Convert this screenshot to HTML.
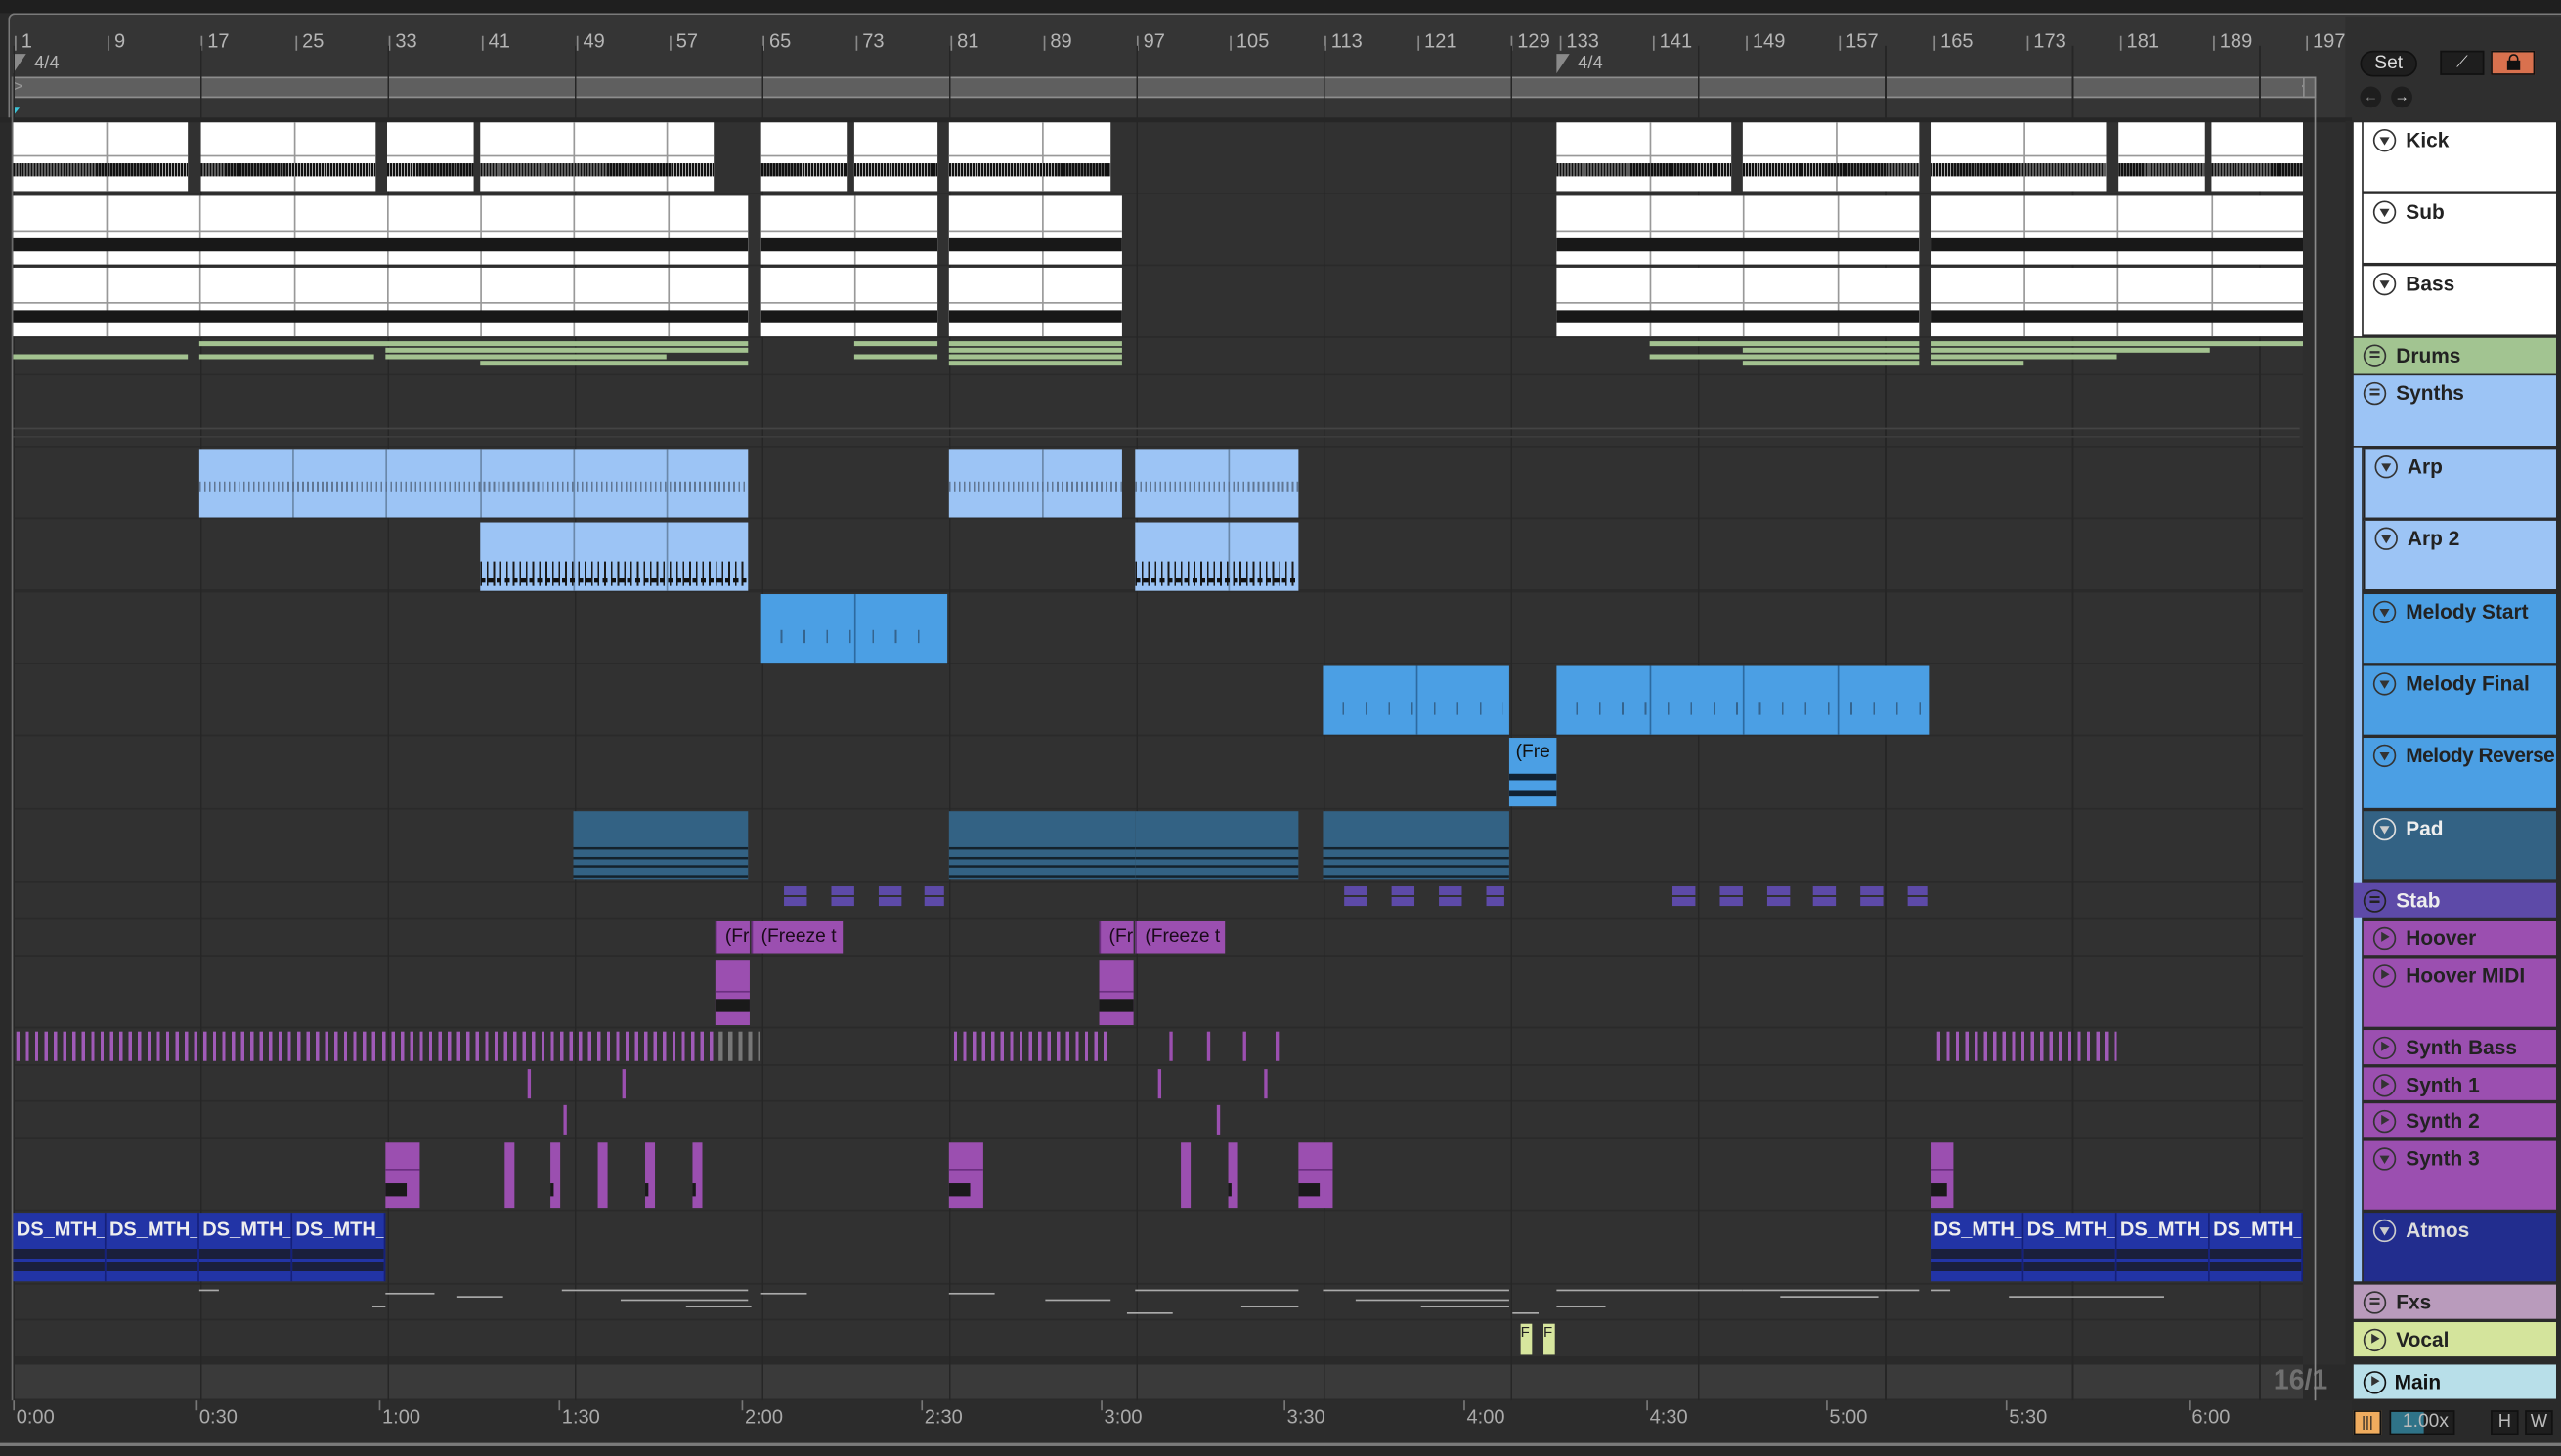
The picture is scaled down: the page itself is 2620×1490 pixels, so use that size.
<!DOCTYPE html>
<html><head><meta charset="utf-8"><style>
*{margin:0;padding:0;box-sizing:border-box}
body{width:2620px;height:1490px;overflow:hidden;background:#2b2b2b}
.w{position:absolute;left:0;top:0;width:1568px;height:892px;transform:scale(1.67092,1.6704);transform-origin:0 0;background:#2a2a2a;overflow:hidden;font-family:"Liberation Sans",sans-serif}
.a{position:absolute}
.row{position:absolute;left:8px;width:1402px;background:#313131}
.grid{position:absolute;left:8px;top:28px;width:1402px;height:830px;background:repeating-linear-gradient(90deg,#262626 0 1px,transparent 1px 114.6px)}
.c{position:absolute;overflow:hidden}
.k{background:#fff;height:42px;top:75px}
.k:before{content:"";position:absolute;left:0;right:0;top:20px;height:1px;background:#999}
.k:after{content:"";position:absolute;left:0;right:0;top:25px;height:8px;background:repeating-linear-gradient(90deg,#111 0 1.3px,#aaa 1.3px 1.8px)}
.s{background:#fff;height:42px}
.s:before{content:"";position:absolute;left:0;right:0;top:21px;height:1px;background:#999}
.s:after{content:"";position:absolute;left:0;right:0;top:26px;height:8px;background:#181818}
.g8{position:absolute;top:0;bottom:0;width:1px;background:#999}
.gl{position:absolute;height:2.5px;background:#a3c290}
.arp{background:#9cc4f5;height:42px;top:275px}
.arp:after{content:"";position:absolute;left:0;right:0;top:20px;height:6px;background:repeating-linear-gradient(90deg,#5a6e88 0 1px,transparent 1px 3px);opacity:.9}
.arp2{background:#9cc4f5;height:42px;top:320px}
.arp2:after{content:"";position:absolute;left:0;right:0;top:24px;height:15px;background:repeating-linear-gradient(90deg,#1a1a1a 0 1px,transparent 1px 4px)}
.arp2:before{content:"";position:absolute;left:0;right:0;top:34px;height:3px;background:repeating-linear-gradient(90deg,#111 0 3px,transparent 3px 5px);z-index:1}
.mel{background:#4b9fe4;height:42px}
.mel:after{content:"";position:absolute;left:4px;right:4px;top:22px;height:8px;background:repeating-linear-gradient(90deg,transparent 0 8px,#2a4a6a 8px 9px,transparent 9px 14px);opacity:.7}
.pad{background:#336284;height:42px;top:497px}
.pad:after{content:"";position:absolute;left:0;right:0;top:22px;height:20px;background:linear-gradient(#14222c,#14222c) 0 0/100% 1.5px no-repeat,linear-gradient(#14222c,#14222c) 0 6px/100% 1.5px no-repeat,linear-gradient(#14222c,#14222c) 0 11px/100% 1.5px no-repeat,linear-gradient(#14222c,#14222c) 0 17px/100% 1.5px no-repeat}
.stab{position:absolute;top:543px;width:14px;height:12px;background:linear-gradient(#5d4aa8 0 45%,#313131 45% 55%,#5d4aa8 55%)}
.hv{position:absolute;top:564px;height:20px;background:#9b4fb0;color:#1a0a1a;font-size:11.5px;line-height:20px;padding-left:5px;white-space:nowrap;overflow:hidden;border-left:1px solid #6b2f80}
.pu{position:absolute;background:#9b4fb0}
.sb{position:absolute;top:632px;height:18px;background:repeating-linear-gradient(90deg,#a05ab8 0 2px,transparent 2px 5.73px)}
.at{position:absolute;top:743px;height:42px;background:#2234a6;color:#eee;font-size:12px;font-weight:bold;padding:3px 0 0 2px;overflow:hidden;border-right:1px solid #15207a}
.at:after{content:"";position:absolute;left:0;right:0;top:20px;height:18px;background:linear-gradient(#2234a6 0 2px,#1a1f3c 2px 8px,#2234a6 8px 10px,#1a1f3c 10px 16px,#2234a6 16px)}
.fx{position:absolute;height:1px;background:#aaa}
.bn{position:absolute;top:18px;font-size:12px;color:#b5b5b5}
.bn:before{content:"";position:absolute;left:-4px;top:4px;width:1px;height:9px;background:#888}
.tn{position:absolute;top:861px;font-size:12px;color:#aaa}
.tn:before{content:"";position:absolute;left:-2px;top:-3px;width:1px;height:6px;background:#777}
.h{position:absolute;height:22px;font-size:12.5px;font-weight:bold;color:#222;padding:4px 0 0 26px;white-space:nowrap;overflow:hidden}
.ic{position:absolute;left:6px;top:4px;width:14px;height:14px;border:1.4px solid #333;border-radius:50%}
.dn:after{content:"";position:absolute;left:2.5px;top:3.5px;border-left:3.3px solid transparent;border-right:3.3px solid transparent;border-top:5px solid #333}
.dn.lt:after{border-top-color:#ccc}
.pl:after{content:"";position:absolute;left:4px;top:2.3px;border-top:3.3px solid transparent;border-bottom:3.3px solid transparent;border-left:5px solid #333}
.gp:after{content:"";position:absolute;left:3px;top:3px;width:6px;height:5px;background:linear-gradient(#333 0 1.3px,transparent 1.3px 2.8px,#333 2.8px 4.1px,transparent 4.1px 5.5px,#333 5.5px) }
.gp.lt:after{background:linear-gradient(#222 0 1.3px,transparent 1.3px 2.8px,#222 2.8px 4.1px,transparent 4.1px 5.5px,#222 5.5px)}
</style></head><body><div class="w">
<div class="a" style="left:0;top:0;width:1568px;height:8px;background:#1f1f1f"></div>
<div class="a" style="left:5px;top:8px;width:1563px;height:66px;background:#353535;border-top:1.5px solid #7a7a7a;border-left:1.5px solid #7a7a7a;border-radius:4px 0 0 0"></div>
<div class="a" style="left:1436px;top:10px;width:132px;height:64px;background:#2f2f2f"></div>
<div class="bn" style="left:13px">1</div><div class="bn" style="left:70px">9</div><div class="bn" style="left:127px">17</div><div class="bn" style="left:185px">25</div><div class="bn" style="left:242px">33</div><div class="bn" style="left:299px">41</div><div class="bn" style="left:357px">49</div><div class="bn" style="left:414px">57</div><div class="bn" style="left:471px">65</div><div class="bn" style="left:528px">73</div><div class="bn" style="left:586px">81</div><div class="bn" style="left:643px">89</div><div class="bn" style="left:700px">97</div><div class="bn" style="left:757px">105</div><div class="bn" style="left:815px">113</div><div class="bn" style="left:872px">121</div><div class="bn" style="left:929px">129</div><div class="bn" style="left:959px">133</div><div class="bn" style="left:1016px">141</div><div class="bn" style="left:1073px">149</div><div class="bn" style="left:1130px">157</div><div class="bn" style="left:1188px">165</div><div class="bn" style="left:1245px">173</div><div class="bn" style="left:1302px">181</div><div class="bn" style="left:1359px">189</div><div class="bn" style="left:1416px">197</div>
<div class="a" style="left:8px;top:33px;width:0;height:0;border-top:12px solid #8a8a8a;border-right:8px solid transparent"></div>
<div class="a" style="left:21px;top:33px;font-size:11px;color:#b5b5b5">4/4</div>
<div class="a" style="left:953px;top:33px;width:0;height:0;border-top:12px solid #8a8a8a;border-right:8px solid transparent"></div>
<div class="a" style="left:966px;top:33px;font-size:11px;color:#b5b5b5">4/4</div>
<div class="a" style="left:8px;top:47px;width:1410px;height:13px;background:#5f5f5f;border-top:1px solid #8d8d8d;border-bottom:1px solid #8d8d8d"></div>
<div class="a" style="left:8px;top:48px;font-size:10px;color:#999;line-height:11px">&gt;</div>
<div class="a" style="left:1409px;top:48px;font-size:10px;color:#999;line-height:11px">&lt;</div>
<div class="a" style="left:8px;top:66px;width:0;height:0;border-top:5px solid #3cc4d8;border-right:4px solid transparent"></div>
<div class="a" style="left:0;top:72px;width:1440px;height:3px;background:#262626"></div>
<div class="row" style="top:75px;height:43px"></div><div class="row" style="top:119px;height:43px"></div><div class="row" style="top:163px;height:43px"></div><div class="row" style="top:207px;height:22px"></div><div class="row" style="top:230px;height:43px"></div><div class="row" style="top:274px;height:43px"></div><div class="row" style="top:318px;height:43px"></div><div class="row" style="top:363px;height:43px"></div><div class="row" style="top:407px;height:43px"></div><div class="row" style="top:451px;height:44px"></div><div class="row" style="top:496px;height:44px"></div><div class="row" style="top:541px;height:21px"></div><div class="row" style="top:563px;height:22px"></div><div class="row" style="top:586px;height:43px"></div><div class="row" style="top:630px;height:22px"></div><div class="row" style="top:653px;height:21px"></div><div class="row" style="top:675px;height:22px"></div><div class="row" style="top:698px;height:43px"></div><div class="row" style="top:742px;height:44px"></div><div class="row" style="top:787px;height:21px"></div><div class="row" style="top:809px;height:22px"></div><div class="row" style="top:836px;height:21px;background:#3a3a3a"></div>
<div class="grid"></div>
<div class="a" style="left:1392px;top:836px;font-size:17px;font-weight:bold;color:#707070">16/1</div>
<div class="a" style="left:8px;top:262px;width:1400px;height:1px;background:#444"></div>
<div class="a" style="left:8px;top:267px;width:1400px;height:1px;background:#3c3c3c"></div>
<div class="c k" style="left:8px;width:107px"><div class="g8" style="left:57px"></div></div>
<div class="c k" style="left:123px;width:107px"><div class="g8" style="left:57px"></div></div>
<div class="c k" style="left:237px;width:53px"></div>
<div class="c k" style="left:294px;width:143px"><div class="g8" style="left:57px"></div><div class="g8" style="left:114px"></div></div>
<div class="c k" style="left:466px;width:53px"></div><div class="c k" style="left:523px;width:51px"></div>
<div class="c k" style="left:581px;width:99px"><div class="g8" style="left:57px"></div></div>
<div class="c k" style="left:953px;width:107px"><div class="g8" style="left:57px"></div></div>
<div class="c k" style="left:1067px;width:108px"><div class="g8" style="left:57px"></div></div>
<div class="c k" style="left:1182px;width:108px"><div class="g8" style="left:57px"></div></div>
<div class="c k" style="left:1297px;width:53px"></div><div class="c k" style="left:1354px;width:56px"></div>
<div class="c s" style="top:120px;left:8px;width:450px"><div class="g8" style="left:57px"></div><div class="g8" style="left:114px"></div><div class="g8" style="left:172px"></div><div class="g8" style="left:229px"></div><div class="g8" style="left:286px"></div><div class="g8" style="left:343px"></div><div class="g8" style="left:401px"></div></div>
<div class="c s" style="top:120px;left:466px;width:108px"><div class="g8" style="left:57px"></div></div>
<div class="c s" style="top:120px;left:581px;width:106px"><div class="g8" style="left:57px"></div></div>
<div class="c s" style="top:120px;left:953px;width:222px"><div class="g8" style="left:57px"></div><div class="g8" style="left:114px"></div><div class="g8" style="left:172px"></div></div>
<div class="c s" style="top:120px;left:1182px;width:228px"><div class="g8" style="left:57px"></div><div class="g8" style="left:114px"></div><div class="g8" style="left:172px"></div></div>
<div class="c s" style="top:164px;left:8px;width:450px"><div class="g8" style="left:57px"></div><div class="g8" style="left:114px"></div><div class="g8" style="left:172px"></div><div class="g8" style="left:229px"></div><div class="g8" style="left:286px"></div><div class="g8" style="left:343px"></div><div class="g8" style="left:401px"></div></div>
<div class="c s" style="top:164px;left:466px;width:108px"><div class="g8" style="left:57px"></div></div>
<div class="c s" style="top:164px;left:581px;width:106px"><div class="g8" style="left:57px"></div></div>
<div class="c s" style="top:164px;left:953px;width:222px"><div class="g8" style="left:57px"></div><div class="g8" style="left:114px"></div><div class="g8" style="left:172px"></div></div>
<div class="c s" style="top:164px;left:1182px;width:228px"><div class="g8" style="left:57px"></div><div class="g8" style="left:114px"></div><div class="g8" style="left:172px"></div></div>
<div class="gl" style="top:209px;left:122px;width:336px"></div><div class="gl" style="top:209px;left:523px;width:51px"></div><div class="gl" style="top:209px;left:581px;width:106px"></div><div class="gl" style="top:209px;left:1010px;width:165px"></div><div class="gl" style="top:209px;left:1182px;width:228px"></div>
<div class="gl" style="top:213px;left:236px;width:222px"></div><div class="gl" style="top:213px;left:581px;width:106px"></div><div class="gl" style="top:213px;left:1067px;width:108px"></div><div class="gl" style="top:213px;left:1182px;width:171px"></div>
<div class="gl" style="top:217px;left:8px;width:107px"></div><div class="gl" style="top:217px;left:122px;width:107px"></div><div class="gl" style="top:217px;left:236px;width:172px"></div><div class="gl" style="top:217px;left:523px;width:51px"></div><div class="gl" style="top:217px;left:581px;width:106px"></div><div class="gl" style="top:217px;left:1010px;width:165px"></div><div class="gl" style="top:217px;left:1182px;width:114px"></div>
<div class="gl" style="top:221px;left:294px;width:164px"></div><div class="gl" style="top:221px;left:581px;width:106px"></div><div class="gl" style="top:221px;left:1067px;width:108px"></div><div class="gl" style="top:221px;left:1182px;width:57px"></div>
<div class="c arp" style="left:122px;width:336px"><div class="g8" style="left:57px;background:#6a88aa"></div><div class="g8" style="left:114px;background:#6a88aa"></div><div class="g8" style="left:172px;background:#6a88aa"></div><div class="g8" style="left:229px;background:#6a88aa"></div><div class="g8" style="left:286px;background:#6a88aa"></div></div>
<div class="c arp" style="left:581px;width:106px"><div class="g8" style="left:57px;background:#6a88aa"></div></div>
<div class="c arp" style="left:695px;width:100px"><div class="g8" style="left:57px;background:#6a88aa"></div></div>
<div class="c arp2" style="left:294px;width:164px"><div class="g8" style="left:57px;background:#6a88aa"></div><div class="g8" style="left:114px;background:#6a88aa"></div></div>
<div class="c arp2" style="left:695px;width:100px"><div class="g8" style="left:57px;background:#6a88aa"></div></div>
<div class="c mel" style="top:364px;left:466px;width:114px"><div class="g8" style="left:57px;background:#2d6aa0"></div></div>
<div class="c mel" style="top:408px;left:810px;width:114px"><div class="g8" style="left:57px;background:#2d6aa0"></div></div>
<div class="c mel" style="top:408px;left:953px;width:228px"><div class="g8" style="left:57px;background:#2d6aa0"></div><div class="g8" style="left:114px;background:#2d6aa0"></div><div class="g8" style="left:172px;background:#2d6aa0"></div></div>
<div class="c" style="top:452px;left:924px;width:29px;height:42px;background:#4b9fe4;font-size:11.5px;color:#111;padding:3px 0 0 4px">(Fre<div class="a" style="left:0;top:22px;width:29px;height:4px;background:#123"></div><div class="a" style="left:0;top:32px;width:29px;height:4px;background:#123"></div></div>
<div class="c pad" style="left:351px;width:107px"></div>
<div class="c pad" style="left:581px;width:114px"></div><div class="c pad" style="left:695px;width:100px"></div>
<div class="c pad" style="left:810px;width:114px"></div>
<div class="stab" style="left:480px"></div><div class="stab" style="left:509px"></div><div class="stab" style="left:538px"></div><div class="stab" style="left:566px;width:12px"></div>
<div class="stab" style="left:823px"></div><div class="stab" style="left:852px"></div><div class="stab" style="left:881px"></div><div class="stab" style="left:910px;width:11px"></div>
<div class="stab" style="left:1024px"></div><div class="stab" style="left:1053px"></div><div class="stab" style="left:1082px"></div><div class="stab" style="left:1110px"></div><div class="stab" style="left:1139px"></div><div class="stab" style="left:1168px;width:12px"></div>
<div class="hv" style="left:438px;width:21px">(Fr</div><div class="hv" style="left:460px;width:56px">(Freeze t</div>
<div class="hv" style="left:673px;width:21px">(Fr</div><div class="hv" style="left:695px;width:55px">(Freeze t</div>
<div class="pu" style="left:438px;top:588px;width:21px;height:40px"><div class="a" style="left:0;top:19px;width:21px;height:1px;background:#6b2f80"></div><div class="a" style="left:0;top:24px;width:21px;height:8px;background:#1a1a1a"></div></div>
<div class="pu" style="left:673px;top:588px;width:21px;height:40px"><div class="a" style="left:0;top:19px;width:21px;height:1px;background:#6b2f80"></div><div class="a" style="left:0;top:24px;width:21px;height:8px;background:#1a1a1a"></div></div>
<div class="sb" style="left:10px;width:222px"></div><div class="sb" style="left:234px;width:204px"></div>
<div class="sb" style="left:440px;width:25px;background:repeating-linear-gradient(90deg,#777 0 2.5px,transparent 2.5px 6px)"></div>
<div class="sb" style="left:584px;width:96px"></div>
<div class="pu" style="left:716px;top:632px;width:2px;height:18px"></div><div class="pu" style="left:739px;top:632px;width:2px;height:18px"></div><div class="pu" style="left:761px;top:632px;width:2px;height:18px"></div><div class="pu" style="left:781px;top:632px;width:2px;height:18px"></div>
<div class="sb" style="left:1186px;width:110px"></div>
<div class="pu" style="left:323px;top:655px;width:2px;height:18px"></div><div class="pu" style="left:381px;top:655px;width:2px;height:18px"></div><div class="pu" style="left:709px;top:655px;width:2px;height:18px"></div><div class="pu" style="left:774px;top:655px;width:2px;height:18px"></div>
<div class="pu" style="left:345px;top:677px;width:2px;height:18px"></div><div class="pu" style="left:745px;top:677px;width:2px;height:18px"></div>
<div class="pu" style="left:236px;top:700px;width:21px;height:40px"><div class="a" style="left:0;top:16px;width:21px;height:1px;background:#6b2f80"></div><div class="a" style="left:0;top:25px;width:13px;height:8px;background:#1a1a1a"></div></div>
<div class="pu" style="left:309px;top:700px;width:6px;height:40px"></div>
<div class="pu" style="left:337px;top:700px;width:6px;height:40px"><div class="a" style="left:0;top:25px;width:2px;height:8px;background:#1a1a1a"></div></div>
<div class="pu" style="left:366px;top:700px;width:6px;height:40px"></div>
<div class="pu" style="left:395px;top:700px;width:6px;height:40px"><div class="a" style="left:0;top:25px;width:2px;height:8px;background:#1a1a1a"></div></div>
<div class="pu" style="left:424px;top:700px;width:6px;height:40px"><div class="a" style="left:0;top:25px;width:2px;height:8px;background:#1a1a1a"></div></div>
<div class="pu" style="left:581px;top:700px;width:21px;height:40px"><div class="a" style="left:0;top:16px;width:21px;height:1px;background:#6b2f80"></div><div class="a" style="left:0;top:25px;width:13px;height:8px;background:#1a1a1a"></div></div>
<div class="pu" style="left:723px;top:700px;width:6px;height:40px"></div>
<div class="pu" style="left:752px;top:700px;width:6px;height:40px"><div class="a" style="left:0;top:25px;width:2px;height:8px;background:#1a1a1a"></div></div>
<div class="pu" style="left:795px;top:700px;width:21px;height:40px"><div class="a" style="left:0;top:16px;width:21px;height:1px;background:#6b2f80"></div><div class="a" style="left:0;top:25px;width:13px;height:8px;background:#1a1a1a"></div></div>
<div class="pu" style="left:1182px;top:700px;width:14px;height:40px"><div class="a" style="left:0;top:16px;width:14px;height:1px;background:#6b2f80"></div><div class="a" style="left:0;top:25px;width:10px;height:8px;background:#1a1a1a"></div></div>
<div class="at" style="left:8px;width:57px">DS_MTH_</div><div class="at" style="left:65px;width:57px">DS_MTH_</div><div class="at" style="left:122px;width:57px">DS_MTH_</div><div class="at" style="left:179px;width:57px">DS_MTH_</div>
<div class="at" style="left:1182px;width:57px">DS_MTH_</div><div class="at" style="left:1239px;width:57px">DS_MTH_</div><div class="at" style="left:1296px;width:57px">DS_MTH_</div><div class="at" style="left:1353px;width:57px">DS_MTH_</div>
<div class="fx" style="left:122px;top:790px;width:12px"></div><div class="fx" style="left:236px;top:792px;width:30px"></div><div class="fx" style="left:280px;top:794px;width:28px"></div><div class="fx" style="left:344px;top:790px;width:114px"></div><div class="fx" style="left:380px;top:796px;width:78px"></div><div class="fx" style="left:420px;top:800px;width:40px"></div><div class="fx" style="left:228px;top:800px;width:8px"></div><div class="fx" style="left:466px;top:792px;width:28px"></div><div class="fx" style="left:581px;top:792px;width:28px"></div><div class="fx" style="left:640px;top:796px;width:40px"></div><div class="fx" style="left:690px;top:804px;width:28px"></div><div class="fx" style="left:695px;top:790px;width:100px"></div><div class="fx" style="left:760px;top:800px;width:35px"></div><div class="fx" style="left:810px;top:790px;width:114px"></div><div class="fx" style="left:830px;top:796px;width:94px"></div><div class="fx" style="left:870px;top:800px;width:54px"></div><div class="fx" style="left:926px;top:804px;width:16px"></div><div class="fx" style="left:953px;top:790px;width:114px"></div><div class="fx" style="left:1067px;top:790px;width:108px"></div><div class="fx" style="left:1090px;top:794px;width:60px"></div><div class="fx" style="left:1182px;top:790px;width:12px"></div><div class="fx" style="left:1230px;top:794px;width:95px"></div><div class="fx" style="left:953px;top:800px;width:30px"></div>
<div class="a" style="left:931px;top:811px;width:7px;height:19px;background:#d7e69e;font-size:9px;color:#222">F</div>
<div class="a" style="left:945px;top:811px;width:7px;height:19px;background:#d7e69e;font-size:9px;color:#222">F</div>
<div class="a" style="left:7px;top:47px;width:1px;height:812px;background:#6a6a6a"></div>
<div class="a" style="left:1410px;top:75px;width:30px;height:761px;background:#2e2e2e"></div>
<div class="a" style="left:1417px;top:47px;width:1px;height:812px;background:#8a8a8a"></div>
<div class="a" style="left:1410px;top:47px;width:8px;height:13px;border:1px solid #8d8d8d;background:#5f5f5f"></div>
<div class="a" style="left:0;top:858px;width:1440px;height:26px;background:#2c2c2c"></div>
<div class="tn" style="left:10px">0:00</div><div class="tn" style="left:122px">0:30</div><div class="tn" style="left:234px">1:00</div><div class="tn" style="left:344px">1:30</div><div class="tn" style="left:456px">2:00</div><div class="tn" style="left:566px">2:30</div><div class="tn" style="left:676px">3:00</div><div class="tn" style="left:788px">3:30</div><div class="tn" style="left:898px">4:00</div><div class="tn" style="left:1010px">4:30</div><div class="tn" style="left:1120px">5:00</div><div class="tn" style="left:1230px">5:30</div><div class="tn" style="left:1342px">6:00</div>
<div class="a" style="left:0;top:884px;width:1568px;height:2px;background:#7a7a7a"></div>
<div class="a" style="left:0;top:886px;width:1568px;height:6px;background:#262626"></div>
<div class="a" style="left:1445px;top:31px;width:35px;height:16px;border-radius:8px;background:#1e1e1e;border:1px solid #111;color:#ddd;font-size:11.5px;text-align:center;line-height:14px">Set</div>
<div class="a" style="left:1494px;top:31px;width:27px;height:15px;background:#1e1e1e;border:1px solid #111;color:#ddd;font-size:10px;text-align:center;line-height:13px">⟋</div>
<div class="a" style="left:1525px;top:31px;width:27px;height:15px;background:#d9714e;border:1px solid #111"><div class="a" style="left:9px;top:5px;width:8px;height:6px;background:#111"></div><div class="a" style="left:10px;top:1px;width:6px;height:6px;border:1.5px solid #111;border-radius:3px 3px 0 0;border-bottom:none"></div></div>
<div class="a" style="left:1445px;top:53px;width:13px;height:13px;border-radius:50%;background:#1e1e1e;color:#888;font-size:9px;text-align:center;line-height:13px">←</div>
<div class="a" style="left:1464px;top:53px;width:13px;height:13px;border-radius:50%;background:#1e1e1e;color:#ddd;font-size:9px;text-align:center;line-height:13px">→</div>
<div class="a" style="left:1436px;top:74px;width:132px;height:762px;background:#2a2a2a"></div>
<div class="a" style="left:1441px;top:75px;width:5px;height:131px;background:#fff"></div>
<div class="a" style="left:1441px;top:274px;width:5px;height:511px;background:#9cc4f5"></div>
<div class="h" style="left:1447px;top:75px;width:118px;height:42px;background:#fff"><span class="ic dn"></span>Kick</div>
<div class="h" style="left:1447px;top:119px;width:118px;height:42px;background:#fff"><span class="ic dn"></span>Sub</div>
<div class="h" style="left:1447px;top:163px;width:118px;height:42px;background:#fff"><span class="ic dn"></span>Bass</div>
<div class="h" style="left:1441px;top:207px;width:124px;background:#a2c491;padding-left:26px"><span class="ic gp"></span>Drums</div>
<div class="h" style="left:1441px;top:230px;width:124px;height:43px;background:#9cc4f5"><span class="ic gp"></span>Synths</div>
<div class="h" style="left:1447px;top:275px;width:118px;height:42px;background:#9cc4f5;border-left:1px solid #222"><span class="ic dn"></span>Arp</div>
<div class="h" style="left:1447px;top:319px;width:118px;height:42px;background:#9cc4f5;border-left:1px solid #222"><span class="ic dn"></span>Arp 2</div>
<div class="h" style="left:1447px;top:364px;width:118px;height:42px;background:#4b9fe4"><span class="ic dn"></span>Melody Start</div>
<div class="h" style="left:1447px;top:408px;width:118px;height:42px;background:#4b9fe4"><span class="ic dn"></span>Melody Final</div>
<div class="h" style="left:1447px;top:452px;width:118px;height:43px;background:#4b9fe4;letter-spacing:-0.3px"><span class="ic dn"></span>Melody Reverse</div>
<div class="h" style="left:1447px;top:497px;width:118px;height:42px;background:#336284;color:#eee"><span class="ic dn lt" style="border-color:#ddd"></span>Pad</div>
<div class="h" style="left:1441px;top:541px;width:124px;height:21px;background:#5d4aa8;color:#eee"><span class="ic gp lt" style="border-color:#222"></span>Stab</div>
<div class="h" style="left:1447px;top:564px;width:118px;height:21px;background:#9b4fb0"><span class="ic pl"></span>Hoover</div>
<div class="h" style="left:1447px;top:587px;width:118px;height:42px;background:#9b4fb0"><span class="ic pl"></span>Hoover MIDI</div>
<div class="h" style="left:1447px;top:631px;width:118px;height:21px;background:#9b4fb0"><span class="ic pl"></span>Synth Bass</div>
<div class="h" style="left:1447px;top:654px;width:118px;height:20px;background:#9b4fb0"><span class="ic pl"></span>Synth 1</div>
<div class="h" style="left:1447px;top:676px;width:118px;height:21px;background:#9b4fb0"><span class="ic pl"></span>Synth 2</div>
<div class="h" style="left:1447px;top:699px;width:118px;height:42px;background:#9b4fb0"><span class="ic dn"></span>Synth 3</div>
<div class="h" style="left:1447px;top:743px;width:118px;height:42px;background:#222d8e;color:#ddd"><span class="ic dn lt" style="border-color:#ccc"></span>Atmos</div>
<div class="h" style="left:1441px;top:787px;width:124px;height:21px;background:#b99bbc"><span class="ic gp"></span>Fxs</div>
<div class="h" style="left:1441px;top:810px;width:124px;height:21px;background:#d4e49c"><span class="ic pl"></span>Vocal</div>
<div class="h" style="left:1441px;top:836px;width:124px;height:21px;background:#b8dfe9;color:#111;padding-left:25px"><span class="ic pl" style="border-color:#111"></span>Main</div>
<div class="a" style="left:1441px;top:864px;width:17px;height:15px;background:#f0ac5e;border:1px solid #111;font-size:9px;text-align:center;color:#222;line-height:13px">|||</div>
<div class="a" style="left:1463px;top:864px;width:40px;height:15px;background:#1e1e1e;border:1px solid #111;font-size:11.5px;color:#bbb;line-height:13px;padding-left:7px"><div class="a" style="left:0;top:0;width:20px;height:13px;background:#2f7388"></div><span style="position:relative">1.00x</span></div>
<div class="a" style="left:1525px;top:864px;width:17px;height:15px;background:#1e1e1e;border:1px solid #111;font-size:11px;color:#bbb;text-align:center;line-height:13px">H</div>
<div class="a" style="left:1546px;top:864px;width:17px;height:15px;background:#1e1e1e;border:1px solid #111;font-size:11px;color:#bbb;text-align:center;line-height:13px">W</div>
</div></body></html>
